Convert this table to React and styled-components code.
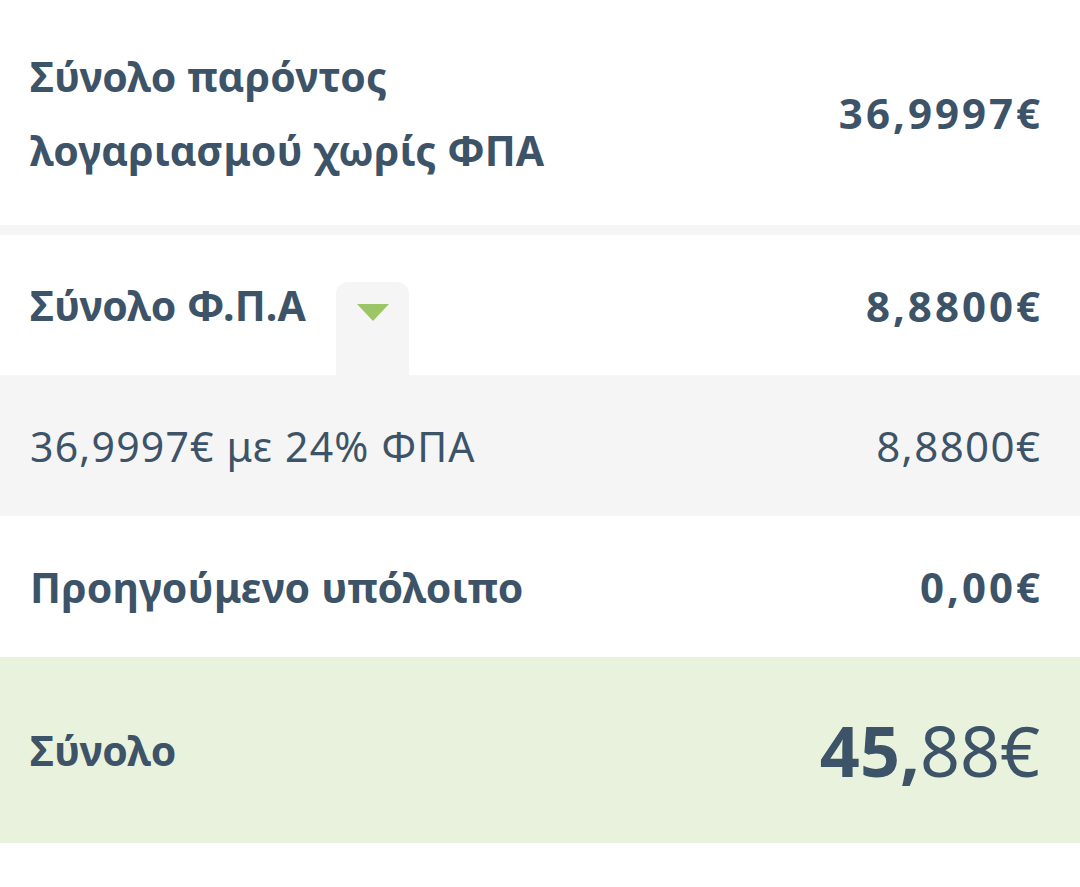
import styled, { createGlobalStyle } from "styled-components"

const GlobalStyle = createGlobalStyle`
    body {
        margin: 0;
        background: #ffffff;
        font-family: "Noto Sans", "DejaVu Sans", sans-serif;
        color: #3d5367;
    }
`

const Sheet = styled.div`
    width: 1080px;
    height: 887px;
    display: flex;
    flex-direction: column;
    background: #ffffff;
`

const Row = styled.div`
    display: flex;
    align-items: center;
    justify-content: space-between;
    padding: 0 40px 0 30px;
    height: ${p => p.h}px;
    flex-shrink: 0;
    background: ${p => p.bg || '#ffffff'};
    border-top: ${p => p.gap ? '10px solid #f5f5f5' : 'none'};
`

const Label = styled.div`
    font-size: 41px;
    font-weight: ${p => p.light ? 400 : 700};
    letter-spacing: ${p => p.light ? '1.2px' : '0.2px'};
    line-height: 74px;
    display: flex;
    align-items: center;
    align-self: ${p => p.stretch ? 'stretch' : 'auto'};
`

const Amount = styled.div`
    font-size: 42px;
    font-weight: ${p => p.light ? 400 : 700};
    letter-spacing: ${p => p.light ? '1.4px' : '3px'};
    margin-right: ${p => p.light ? '-1.4px' : '-3px'};
`

const Toggle = styled.div`
    align-self: flex-end;
    width: 73px;
    height: 103px;
    margin-left: 30px;
    margin-bottom: -10px;
    border-radius: 12px 12px 0 0;
    background: #f5f5f5;
    display: flex;
    justify-content: center;
    padding-top: 22px;
    box-sizing: border-box;
`

const Total = styled.div`
    font-size: 70px;
    b { font-weight: 700; }
    span { font-weight: 400; }
`

function App() {
    return (
        <Sheet>
            <GlobalStyle />
            <Row h={225}>
                <Label>Σύνολο παρόντος<br />λογαριασμού χωρίς ΦΠΑ</Label>
                <Amount>36,9997€</Amount>
            </Row>
            <Row h={140} gap>
                <Label stretch>
                    Σύνολο Φ.Π.Α
                    <Toggle>
                        <svg width="32" height="17" viewBox="0 0 32 17">
                            <path d="M0 0 L32 0 L16 17 Z" fill="#9cc566" />
                        </svg>
                    </Toggle>
                </Label>
                <Amount>8,8800€</Amount>
            </Row>
            <Row h={141} bg="#f5f5f5">
                <Label light>36,9997€ με 24% ΦΠΑ</Label>
                <Amount light>8,8800€</Amount>
            </Row>
            <Row h={141}>
                <Label>Προηγούμενο υπόλοιπο</Label>
                <Amount>0,00€</Amount>
            </Row>
            <Row h={186} bg="#e9f2dd">
                <Label>Σύνολο</Label>
                <Total><b>45,</b><span>88€</span></Total>
            </Row>
        </Sheet>
    )
}

export default App
